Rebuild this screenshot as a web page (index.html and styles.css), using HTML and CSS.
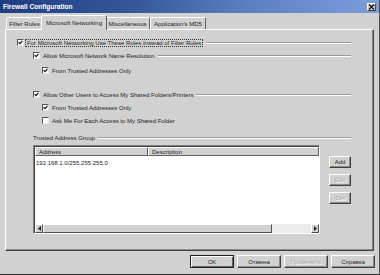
FILE: index.html
```html
<html>
<head>
<meta charset="UTF-8">
<title>Firewall Configuration</title>
<link rel="stylesheet" href="styles.css">
</head>
<body>
<div class="window">
    <div class="titlebar">
        <span class="title">Firewall Configuration</span>
        <span class="close"><svg width="7" height="6" viewBox="0 0 7 6"><path d="M1 0.5 L6 5.5 M6 0.5 L1 5.5" stroke="#111" stroke-width="1.3"/></svg></span>
    </div>
    <div class="tabs">
        <div class="tab t1">Filter Rules</div>
        <div class="tab t2 active">Microsoft Networking</div>
        <div class="tab t3">Miscellaneous</div>
        <div class="tab t4">Application's MD5</div>
    </div>
    <div class="panel">
        <div class="row r1">
            <span class="cb checked"><svg width="5" height="5" viewBox="0 0 5 5"><path d="M0.6 2.2 L2 3.7 L4.4 0.8" fill="none" stroke="#111" stroke-width="1.2"/></svg></span>
            <span class="label focus">For Microsoft Networking Use These Rules Instead of Filter Rules</span>
            <span class="etch"></span>
        </div>
        <div class="row lvl1 r2">
            <span class="cb checked"><svg width="5" height="5" viewBox="0 0 5 5"><path d="M0.6 2.2 L2 3.7 L4.4 0.8" fill="none" stroke="#111" stroke-width="1.2"/></svg></span>
            <span class="label">Allow Microsoft Network Name Resolution</span>
            <span class="etch"></span>
        </div>
        <div class="row lvl2 r3">
            <span class="cb checked"><svg width="5" height="5" viewBox="0 0 5 5"><path d="M0.6 2.2 L2 3.7 L4.4 0.8" fill="none" stroke="#111" stroke-width="1.2"/></svg></span>
            <span class="label">From Trusted Addresses Only</span>
        </div>
        <div class="row lvl1 r4">
            <span class="cb checked"><svg width="5" height="5" viewBox="0 0 5 5"><path d="M0.6 2.2 L2 3.7 L4.4 0.8" fill="none" stroke="#111" stroke-width="1.2"/></svg></span>
            <span class="label">Allow Other Users to Access My Shared Folders/Printers</span>
            <span class="etch"></span>
        </div>
        <div class="row lvl2 r5">
            <span class="cb checked"><svg width="5" height="5" viewBox="0 0 5 5"><path d="M0.6 2.2 L2 3.7 L4.4 0.8" fill="none" stroke="#111" stroke-width="1.2"/></svg></span>
            <span class="label">From Trusted Addresses Only</span>
        </div>
        <div class="row lvl2 r6">
            <span class="cb"></span>
            <span class="label">Ask Me For Each Access to My Shared Folder</span>
        </div>
        <div class="row lvl1 group">
            <span class="label">Trusted Address Group</span>
            <span class="etch"></span>
        </div>
        <div class="list-area">
            <div class="listview">
                <div class="lv-head">
                    <span class="col addr">Address</span>
                    <span class="col desc">Description</span>
                </div>
                <div class="lv-body">
                    <div class="lv-row">192.168.1.0/255.255.255.0</div>
                </div>
                <div class="hscroll">
                    <span class="arrow"><svg width="3" height="5" viewBox="0 0 3 5"><path d="M3 0 L0 2.5 L3 5 Z" fill="#222"/></svg></span>
                    <span class="thumb"></span>
                    <span class="track"></span>
                    <span class="arrow"><svg width="3" height="5" viewBox="0 0 3 5"><path d="M0 0 L3 2.5 L0 5 Z" fill="#222"/></svg></span>
                </div>
            </div>
            <div class="side-buttons">
                <button class="btn">Add</button>
                <button class="btn" disabled>Edit</button>
                <button class="btn" disabled>Del</button>
            </div>
        </div>
    </div>
    <div class="footer">
        <button class="btn wide default">OK</button>
        <button class="btn wide">Отмена</button>
        <button class="btn wide" disabled>Применить</button>
        <button class="btn wide">Справка</button>
    </div>
</div>
</body>
</html>
```
FILE: styles.css
```css
body {
    margin: 0;
    background: #d1d1d1;
    font-family: "Liberation Sans", Arial, sans-serif;
    font-size: 6px;
    color: #222;
}
.window {
    width: 380px;
    height: 275px;
    box-sizing: border-box;
    background: #d1d1d1;
    border-bottom: 1px solid #303030;
    border-right: 1px solid #505050;
    display: flex;
    flex-direction: column;
}
.titlebar {
    height: 13px;
    display: flex;
    align-items: center;
    justify-content: space-between;
    padding: 0 3px 0 3px;
    background: linear-gradient(90deg, #1e3e80 0%, #34579c 35%, #5a7fc2 65%, #7c9ddb 100%);
}
.title {
    color: #fff;
    font-weight: bold;
    font-size: 6.6px;
}
.close {
    width: 9px;
    height: 8px;
    box-sizing: border-box;
    background: #d4d4d4;
    border: 1px solid;
    border-color: #fff #404040 #404040 #fff;
    display: flex;
    align-items: center;
    justify-content: center;
}
.tabs {
    display: flex;
    align-items: flex-end;
    height: 14px;
    margin-top: 2px;
    padding-left: 6px;
    position: relative;
    z-index: 1;
}
.tab {
    height: 12px;
    box-sizing: border-box;
    display: flex;
    align-items: center;
    justify-content: center;
    border: 1px solid;
    border-bottom: none;
    border-color: #fff #606060 transparent #fff;
    border-radius: 2px 2px 0 0;
    background: #d1d1d1;
}
.t1 { width: 37px; }
.t2 { width: 66px; }
.t3 { width: 45px; }
.t4 { width: 56px; }
.tab.active {
    height: 15px;
    margin: 0 -2px -1px;
    position: relative;
}
.panel {
    margin-left: 5px;
    width: 369px;
    height: 222px;
    box-sizing: border-box;
    border: 1px solid;
    border-color: #fff #404040 #404040 #fff;
    box-shadow: inset -1px -1px 0 #8a8a8a;
    padding: 6px 22px 0 11px;
    display: flex;
    flex-direction: column;
}
.row {
    height: 13px;
    display: flex;
    align-items: center;
    white-space: nowrap;
}
.lvl1 { margin-left: 16px; }
.lvl2 { margin-left: 25px; }
.r3 { margin-top: 2px; }
.r4 { margin-top: 11px; }
.group { margin-top: 4px; }
.cb {
    width: 7px;
    height: 7px;
    box-sizing: border-box;
    background: #fff;
    border: 1px solid;
    border-color: #555 #e8e8e8 #e8e8e8 #555;
    margin-right: 3px;
    display: flex;
    align-items: center;
    justify-content: center;
    flex-shrink: 0;
}
.focus {
    margin-left: -2px;
    padding: 0 1px;
    border: 1px dotted #333;
}
.etch {
    flex: 1;
    height: 0;
    margin-left: 3px;
    border-top: 1px solid #9a9a9a;
    border-bottom: 1px solid #fff;
}
.list-area {
    display: flex;
    margin: 1px 0 0 16px;
    gap: 9px;
}
.listview {
    width: 290px;
    height: 89px;
    box-sizing: border-box;
    background: #fff;
    border: 1px solid;
    border-color: #808080 #fff #fff #808080;
    box-shadow: inset 1px 1px 0 #404040;
    padding: 1px 0 0 1px;
    display: flex;
    flex-direction: column;
}
.lv-head {
    display: flex;
    height: 9px;
}
.col {
    box-sizing: border-box;
    background: #d1d1d1;
    border: 1px solid;
    border-color: #fff #606060 #606060 #fff;
    padding-left: 3px;
    display: flex;
    align-items: center;
}
.addr { width: 113px; }
.desc { flex: 1; }
.lv-body {
    flex: 1;
    padding: 3px 0 0 1px;
}
.lv-row {
    height: 9px;
    line-height: 9px;
}
.hscroll {
    display: flex;
    height: 9px;
}
.arrow {
    width: 8px;
    box-sizing: border-box;
    background: #d1d1d1;
    border: 1px solid;
    border-color: #fff #505050 #505050 #fff;
    display: flex;
    align-items: center;
    justify-content: center;
}
.thumb {
    width: 229px;
    box-sizing: border-box;
    background: #d1d1d1;
    border: 1px solid;
    border-color: #fff #505050 #505050 #fff;
}
.track {
    flex: 1;
    background: #ececec;
}
.side-buttons {
    display: flex;
    flex-direction: column;
    gap: 6px;
    padding-top: 11px;
}
.btn {
    width: 22px;
    height: 12px;
    box-sizing: border-box;
    padding: 0;
    font: inherit;
    color: #222;
    background: #d1d1d1;
    border: 1px solid;
    border-color: #fff #404040 #404040 #fff;
    box-shadow: inset -1px -1px 0 #8a8a8a;
}
.btn:disabled {
    color: #a8a8a8;
    text-shadow: 1px 1px 0 #fff;
}
.footer {
    display: flex;
    justify-content: flex-end;
    gap: 3px;
    margin-top: 4px;
    padding-right: 4px;
}
.btn.wide {
    width: 44px;
    height: 13px;
}
.btn.default {
    border: 1px solid #222;
    box-shadow: inset 1px 1px 0 #fff, inset -1px -1px 0 #606060;
}
```
